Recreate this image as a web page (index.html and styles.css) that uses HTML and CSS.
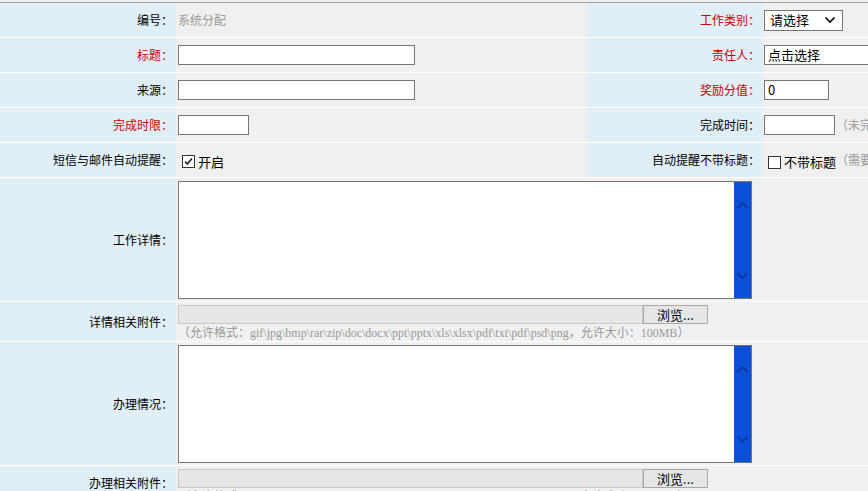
FILE: index.html
```html
<!DOCTYPE html>
<html>
<head>
<meta charset="utf-8">
<link rel="stylesheet" href="styles.css">
</head>
<body>
<table class="form">
  <colgroup>
    <col class="c-label"><col class="c-value"><col class="c-label"><col class="c-value">
  </colgroup>
  <tr class="r-std">
    <td class="lbl">编号：</td>
    <td class="val"><span class="muted">系统分配</span></td>
    <td class="lbl req">工作类别：</td>
    <td class="val val-r"><div class="select"><span>请选择</span><svg width="12" height="8" viewBox="0 0 12 8"><path d="M1.5 1.5 L6 6 L10.5 1.5" fill="none" stroke="#000" stroke-width="1.6"/></svg></div></td>
  </tr>
  <tr class="r-std">
    <td class="lbl req">标题：</td>
    <td class="val"><div class="input w-title"></div></td>
    <td class="lbl req">责任人：</td>
    <td class="val val-r"><div class="input w-person">点击选择</div></td>
  </tr>
  <tr class="r-std">
    <td class="lbl">来源：</td>
    <td class="val"><div class="input w-title"></div></td>
    <td class="lbl req">奖励分值：</td>
    <td class="val val-r"><div class="input w-score">0</div></td>
  </tr>
  <tr class="r-std">
    <td class="lbl req">完成时限：</td>
    <td class="val"><div class="input w-date"></div></td>
    <td class="lbl">完成时间：</td>
    <td class="val val-r"><div class="inline"><div class="input w-date2"></div><span class="hint">（未完成时不填）</span></div></td>
  </tr>
  <tr class="r-std">
    <td class="lbl">短信与邮件自动提醒：</td>
    <td class="val"><label class="check"><span class="box"><svg width="11" height="11" viewBox="0 0 11 11"><path d="M2 5.5 L4.3 8 L9 2.5" fill="none" stroke="#222" stroke-width="1.6"/></svg></span><span class="ctext">开启</span></label></td>
    <td class="lbl">自动提醒不带标题：</td>
    <td class="val val-r"><div class="inline"><label class="check"><span class="box"></span><span class="ctext">不带标题</span></label><span class="hint hint2">（需要时勾选）</span></div></td>
  </tr>
  <tr class="r-area">
    <td class="lbl">工作详情：</td>
    <td class="val" colspan="3">
      <div class="area"><div class="area-text"></div><div class="sbar"><svg width="17" height="116" viewBox="0 0 17 116"><path d="M3.5 26 L8.5 21 L13.5 26" fill="none" stroke="#0a3aa0" stroke-width="1.8"/><path d="M3.5 91 L8.5 96 L13.5 91" fill="none" stroke="#0a3aa0" stroke-width="1.8"/></svg></div></div>
    </td>
  </tr>
  <tr class="r-file">
    <td class="lbl">详情相关附件：</td>
    <td class="val" colspan="3">
      <div class="file"><div class="file-path"></div><div class="file-btn">浏览...</div></div>
      <div class="allow">（允许格式：<span class="latin">gif\jpg\bmp\rar\zip\doc\docx\ppt\pptx\xls\xlsx\pdf\txt\pdf\psd\png</span>，允许大小：<span class="latin">100MB</span>）</div>
    </td>
  </tr>
  <tr class="r-area">
    <td class="lbl">办理情况：</td>
    <td class="val" colspan="3">
      <div class="area"><div class="area-text"></div><div class="sbar"><svg width="17" height="116" viewBox="0 0 17 116"><path d="M3.5 26 L8.5 21 L13.5 26" fill="none" stroke="#0a3aa0" stroke-width="1.8"/><path d="M3.5 91 L8.5 96 L13.5 91" fill="none" stroke="#0a3aa0" stroke-width="1.8"/></svg></div></div>
    </td>
  </tr>
  <tr class="r-file">
    <td class="lbl lbl-last">办理相关附件：</td>
    <td class="val val-last" colspan="3">
      <div class="file"><div class="file-path"></div><div class="file-btn">浏览...</div></div>
      <div class="allow">（允许格式：<span class="latin">gif\jpg\bmp\rar\zip\doc\docx\ppt\pptx\xls\xlsx\pdf\txt\pdf\psd\png</span>，允许大小：<span class="latin">100MB</span>）</div>
    </td>
  </tr>
</table>
</body>
</html>
```

FILE: styles.css
```css
html, body {
  margin: 0;
  padding: 0;
  overflow: hidden;
  background: #f0f0f0;
}
body {
  font-family: "Noto Sans CJK SC", "Liberation Sans", sans-serif;
  font-size: 12px;
  color: #000;
}
.form {
  margin-top: 2px;
  border-top: 1px solid #a0a0a0;
  border-collapse: collapse;
  table-layout: fixed;
  width: 1174px;
}
.c-label { width: 176px; }
.c-value { width: 411px; }
.form td {
  padding: 0;
  border-bottom: 1px solid #ffffff;
  vertical-align: middle;
  line-height: 16px;
}
.r-std td { height: 34px; }
.r-area td { height: 123px; }
.r-file td { height: 39px; }
.lbl {
  background: #dfeef7;
  text-align: right;
  padding-right: 3px !important;
  white-space: nowrap;
}
.req { color: #cc0000; }
.val {
  background: #f0f0f0;
  padding-left: 2px !important;
  white-space: nowrap;
}
.val-r { padding-left: 1px !important; }
.muted { color: #999; }
.input {
  box-sizing: border-box;
  height: 20px;
  border: 1px solid #767676;
  background: #fff;
  padding: 0 3px;
  line-height: 18px;
  font-size: 13px;
}
.w-title { width: 237px; }
.w-person { width: 120px; }
.w-score { width: 65px; }
.w-date { width: 71px; }
.w-date2 { width: 71px; }
.select {
  box-sizing: border-box;
  width: 79px;
  height: 21px;
  border: 1px solid #767676;
  background: #fff;
  display: flex;
  align-items: center;
  justify-content: space-between;
  padding: 0 6px 0 5px;
  font-size: 13px;
}
.inline {
  display: flex;
  align-items: center;
}
.hint {
  color: #999;
  margin-left: 1px;
}
.hint2 { margin-left: 0; }
.check {
  display: inline-flex;
  align-items: center;
  margin-left: 4px;
  padding-top: 4px;
}
.box {
  box-sizing: border-box;
  width: 13px;
  height: 13px;
  border: 1px solid #333;
  background: #fff;
  display: inline-flex;
  align-items: center;
  justify-content: center;
}
.ctext {
  font-size: 13px;
  margin-left: 3px;
}
.area {
  box-sizing: border-box;
  width: 574px;
  height: 118px;
  border: 1px solid #767676;
  background: #fff;
  display: flex;
}
.area-text { flex: 1; }
.sbar {
  width: 17px;
  background: #0a50d8;
}
.sbar svg { display: block; }
.file {
  display: flex;
  height: 19px;
  margin-top: 2px;
}
.file-path {
  box-sizing: border-box;
  width: 465px;
  height: 19px;
  background: #e6e6e6;
  border: 1px solid #c8c8c8;
}
.file-btn {
  box-sizing: border-box;
  width: 65px;
  height: 19px;
  background: #e6e6e6;
  border: 1px solid #a8a8a8;
  text-align: center;
  line-height: 17px;
  font-size: 13px;
}
.allow {
  color: #999;
  line-height: 16px;
  margin-top: 0;
}
.latin { font-family: "Liberation Serif", serif; font-size: 12px; }
.r-file:last-child td { vertical-align: top; }
.lbl-last { padding-top: 9px !important; }
.val-last .file { margin-top: 3px; }
```
